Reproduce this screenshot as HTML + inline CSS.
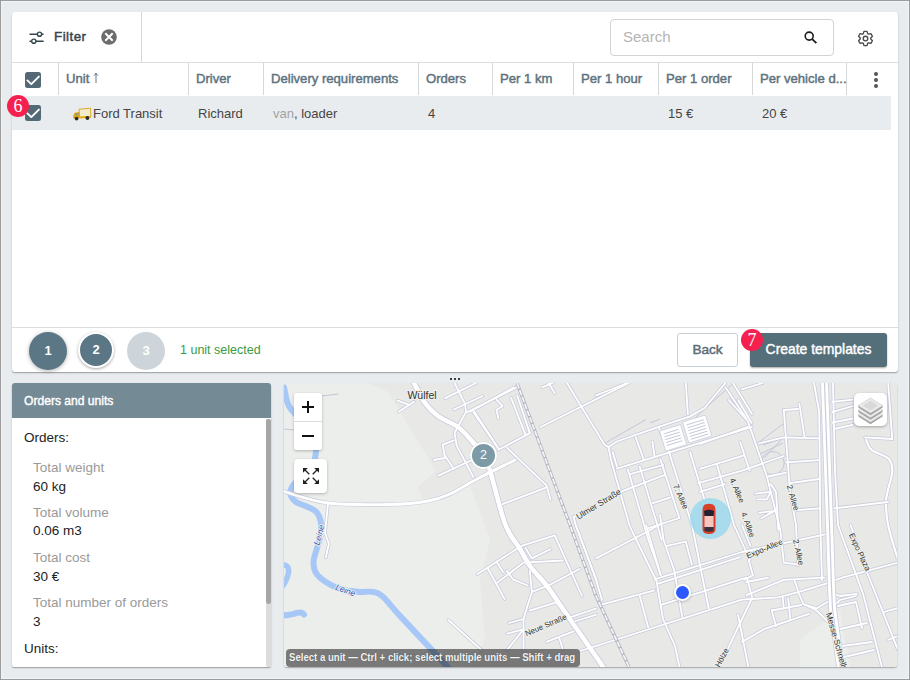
<!DOCTYPE html>
<html><head><meta charset="utf-8">
<style>
*{box-sizing:border-box;margin:0;padding:0}
html,body{width:910px;height:680px;overflow:hidden}
body{position:relative;background:#e8ecef;font-family:"Liberation Sans",sans-serif;}
#frame{position:absolute;left:0;top:0;width:910px;height:680px;border:1px solid #9c9c9c;z-index:50;pointer-events:none}
#frame2{position:absolute;left:1px;top:1px;width:908px;height:678px;border:1px solid #f2f5f7;z-index:49;pointer-events:none}
.abs{position:absolute}
#top{left:12px;top:12px;width:886px;height:360px;background:#fff;border-radius:3px;box-shadow:0 1px 1.5px rgba(0,0,0,.35)}
.vdiv{position:absolute;width:1px;background:#d5d7d9}
.hdr{position:absolute;top:59px;font-size:13.1px;font-weight:normal;-webkit-text-stroke:0.45px #5d727e;color:#5d727e;white-space:nowrap}
.cell{position:absolute;top:94px;font-size:13px;color:#333;white-space:nowrap}
.cb{position:absolute;width:16.6px;height:16.7px;background:#536a76;border-radius:2.5px}
.cb svg{position:absolute;left:0;top:0}
.badge{position:absolute;width:22px;height:22px;border-radius:50%;background:#f6204e;color:#fff;font-family:"Liberation Serif",serif;font-size:18px;text-align:center;line-height:23px}
#left{left:12px;top:383px;width:259px;height:284px;background:#fff;border-radius:3px 3px 2px 2px;box-shadow:0 1px 1.5px rgba(0,0,0,.35);overflow:hidden}
#left .head{position:absolute;left:0;top:0;width:259px;height:35px;background:#748a95;color:#fff;font-size:12.1px;-webkit-text-stroke:0.4px #fff;padding:11px 0 0 12px}
.lbl{position:absolute;left:21px;font-size:13.5px;color:#9a9a9a;white-space:nowrap}
.val{position:absolute;left:21px;font-size:13.5px;color:#222;white-space:nowrap}
.mlbl{position:absolute;color:#3a3a3a;white-space:nowrap;line-height:1}
#map{left:284px;top:383px;width:613px;height:284px;background:#e9eae8;overflow:hidden;border-radius:3px;box-shadow:0 1px 1.5px rgba(0,0,0,.3)}
</style></head><body>
<div id="frame"></div><div id="frame2"></div>

<div id="top" class="abs">
  <!-- toolbar -->
  <svg class="abs" style="left:15px;top:16px" width="18" height="18" viewBox="0 0 18 18">
    <g stroke="#34474f" stroke-width="1.4" fill="none">
      <path d="M2.5 6.2H10.3M14.7 6.2H16.6"/><circle cx="12.5" cy="6.2" r="2.1"/>
      <path d="M2.5 13.2H4.6M9 13.2H16.6"/><circle cx="6.8" cy="13.2" r="2.1"/>
    </g>
  </svg>
  <div class="abs" style="left:42px;top:15.5px;font-size:13.4px;letter-spacing:0.45px;-webkit-text-stroke:0.45px #37444d;color:#37444d;line-height:18px">Filter</div>
  <svg class="abs" style="left:89px;top:17px" width="16" height="16" viewBox="0 0 16 16">
    <circle cx="8" cy="8" r="7.8" fill="#6b6b6b"/>
    <path d="M4.3 4.3L11.7 11.7M11.7 4.3L4.3 11.7" stroke="#fff" stroke-width="2"/>
  </svg>
  <div class="vdiv" style="left:129px;top:0;height:50px"></div>
  <div class="abs" style="left:598px;top:7px;width:224px;height:37px;border:1px solid #d3d3d3;border-radius:4px"></div>
  <div class="abs" style="left:611px;top:15px;font-size:15px;color:#b4b4b4;line-height:20px">Search</div>
  <svg class="abs" style="left:790px;top:17px" width="16" height="16" viewBox="0 0 16 16">
    <circle cx="7.2" cy="7.1" r="4" stroke="#1d1d1d" stroke-width="1.6" fill="none"/>
    <path d="M10.2 10.1L14.4 14.1" stroke="#1d1d1d" stroke-width="1.8"/>
  </svg>
  <svg class="abs" style="left:843px;top:15.5px" width="21" height="21" viewBox="0 0 21 21">
    <path d="M8.34 5.66 L8.98 3.36 L12.02 3.36 L12.66 5.66 L13.62 6.21 L15.92 5.62 L17.44 8.24 L15.77 9.95 L15.77 11.05 L17.44 12.76 L15.92 15.38 L13.62 14.79 L12.66 15.34 L12.02 17.64 L8.98 17.64 L8.34 15.34 L7.38 14.79 L5.08 15.38 L3.56 12.76 L5.23 11.05 L5.23 9.95 L3.56 8.24 L5.08 5.62 L7.38 6.21Z" fill="none" stroke="#4a4a4a" stroke-width="1.35" stroke-linejoin="round"/>
    <circle cx="10.5" cy="10.5" r="2.3" fill="none" stroke="#4a4a4a" stroke-width="1.35"/>
  </svg>
  <div class="abs" style="left:0;top:50px;width:886px;height:1px;background:#dedede"></div>
  <!-- header -->
  <div class="cb" style="left:12.8px;top:59.5px"><svg width="17" height="17" viewBox="0 0 17 17"><path d="M2.4 8.4L6.3 12.1L13.9 4.6" stroke="#fff" stroke-width="1.9" stroke-linecap="round" stroke-linejoin="round" fill="none"/></svg></div>
  <div class="vdiv" style="left:46px;top:51px;height:32px"></div>
  <div class="vdiv" style="left:176px;top:51px;height:32px"></div>
  <div class="vdiv" style="left:251px;top:51px;height:32px"></div>
  <div class="vdiv" style="left:406px;top:51px;height:32px"></div>
  <div class="vdiv" style="left:480px;top:51px;height:32px"></div>
  <div class="vdiv" style="left:561px;top:51px;height:32px"></div>
  <div class="vdiv" style="left:646px;top:51px;height:32px"></div>
  <div class="vdiv" style="left:740px;top:51px;height:32px"></div>
  <div class="vdiv" style="left:834px;top:51px;height:32px"></div>
  <div class="hdr" style="left:54px">Unit</div><svg class="abs" style="left:81px;top:60px" width="6" height="12" viewBox="0 0 6 12"><path d="M3 1.5V11" stroke="#5d727e" stroke-width="0.95"/><path d="M1.2 3.6L3 1.1L4.8 3.6" stroke="#5d727e" stroke-width="0.95" fill="none"/></svg>
  <div class="hdr" style="left:184px">Driver</div>
  <div class="hdr" style="left:259px">Delivery requirements</div>
  <div class="hdr" style="left:414px">Orders</div>
  <div class="hdr" style="left:488px">Per 1 km</div>
  <div class="hdr" style="left:569px">Per 1 hour</div>
  <div class="hdr" style="left:654px">Per 1 order</div>
  <div class="hdr" style="left:748px">Per vehicle d...</div>
  <div class="abs" style="left:862px;top:60px;width:4px;height:16px">
    <div class="abs" style="left:0;top:0;width:4px;height:4px;border-radius:50%;background:#555"></div>
    <div class="abs" style="left:0;top:6px;width:4px;height:4px;border-radius:50%;background:#555"></div>
    <div class="abs" style="left:0;top:12px;width:4px;height:4px;border-radius:50%;background:#555"></div>
  </div>
  <!-- row -->
  <div class="abs" style="left:0;top:84px;width:879px;height:34px;background:#e9ecef"></div>
  <div class="cb" style="left:12.8px;top:92.8px"><svg width="17" height="17" viewBox="0 0 17 17"><path d="M2.4 8.4L6.3 12.1L13.9 4.6" stroke="#fff" stroke-width="1.9" stroke-linecap="round" stroke-linejoin="round" fill="none"/></svg></div>
  <svg class="abs" style="left:60px;top:95px" width="20" height="14" viewBox="0 0 20 14">
    <path d="M7 2.2L18.6 1.2L18.9 9.6L7.6 10.4Z" fill="#f2ebc8" stroke="#d9a514" stroke-width="0.9"/>
    <path d="M7 5L2.6 5.8L1 9.2L1.2 11.4L8 11L7.6 5Z" fill="#e3ac10"/>
    <path d="M3.3 6.4L6.4 5.9L6.5 8.2L2.6 8.6Z" fill="#8a9aa2"/>
    <path d="M7.6 9.6L18.9 9L19 10.8L7.8 11.6Z" fill="#e3ac10"/>
    <circle cx="4.6" cy="11.6" r="1.9" fill="#2b2b2b"/><circle cx="15.4" cy="11" r="1.9" fill="#2b2b2b"/>
  </svg>
  <div class="cell" style="left:81px;color:#454545">Ford Transit</div>
  <div class="cell" style="left:186px;color:#454545">Richard</div>
  <div class="cell" style="left:261px;color:#454545"><span style="color:#a3a3a3">van</span>, loader</div>
  <div class="cell" style="left:416px;color:#454545">4</div>
  <div class="cell" style="left:656px;color:#454545">15 &#8364;</div>
  <div class="cell" style="left:750px;color:#454545">20 &#8364;</div>
  <!-- footer -->
  <div class="abs" style="left:0;top:315px;width:886px;height:1px;background:#dcdcdc"></div>
  <div class="abs" style="left:17px;top:319.5px;width:38px;height:38px;border-radius:50%;background:#5b7684;box-shadow:0 1px 4px rgba(0,0,0,.3);color:#fff;font-weight:bold;font-size:13px;text-align:center;line-height:38px">1</div>
  <div class="abs" style="left:66px;top:320px;width:36px;height:36px;border-radius:50%;background:#5b7684;border:2.5px solid #fff;box-shadow:0 1px 3px rgba(0,0,0,.35);color:#fff;font-weight:bold;font-size:13px;text-align:center;line-height:31px">2</div>
  <div class="abs" style="left:115px;top:319.5px;width:38px;height:38px;border-radius:50%;background:#cdd5db;color:#fff;font-weight:bold;font-size:13px;text-align:center;line-height:38px">3</div>
  <div class="abs" style="left:168px;top:330px;font-size:12.5px;color:#3a9a3f;line-height:16px;white-space:nowrap">1 unit selected</div>
  <div class="abs" style="left:665px;top:321px;width:61px;height:34px;border:1px solid #c9d1d6;border-radius:3px;color:#5b6b75;font-size:13.6px;-webkit-text-stroke:0.45px #5b6b75;text-align:center;line-height:32px">Back</div>
  <div class="abs" style="left:738px;top:321px;width:137px;height:34px;background:#546e7a;border-radius:3px;box-shadow:0 1px 2px rgba(0,0,0,.35);color:#fff;font-size:13.9px;-webkit-text-stroke:0.45px #fff;text-align:center;line-height:33px">Create templates</div>
</div>
<div class="badge" style="left:7px;top:95px">6</div>
<div class="badge" style="left:741px;top:329px">7</div>


<div id="left" class="abs">
  <div class="head">Orders and units</div>
  <div class="val" style="left:12px;top:47px">Orders:</div>
  <div class="lbl" style="top:77px">Total weight</div>
  <div class="val" style="top:95.5px">60 kg</div>
  <div class="lbl" style="top:122px">Total volume</div>
  <div class="val" style="top:140px">0.06 m3</div>
  <div class="lbl" style="top:167px">Total cost</div>
  <div class="val" style="top:185.5px">30 &#8364;</div>
  <div class="lbl" style="top:212px">Total number of orders</div>
  <div class="val" style="top:230.5px">3</div>
  <div class="val" style="left:12px;top:258px">Units:</div>
  <div class="abs" style="left:254px;top:36px;width:5px;height:248px;background:#dcdcdc;border-radius:0 0 2px 2px"></div>
  <div class="abs" style="left:254px;top:36px;width:5px;height:185px;background:#a6a6a6;border-radius:2.5px"></div>
</div>

<div id="map" class="abs">
<svg class="abs" style="left:0;top:0" width="614" height="284" viewBox="284 383 614 284">
<rect x="284" y="383" width="614" height="284" fill="#e8e9e7"/>
<path d="M284 383 L368 383 L388 392 L436 471 L418 487 L423 500 L470 485 L490 540 L480 580 L485 640 L470 667 L284 667Z" fill="#eceeeb"/>
<path d="M800 640 L840 610 L850 667 L800 667Z" fill="#eceeeb"/>
<path d="M284.0 387.4 C284.7 390.3 286.2 400.2 288.4 405.0 C290.6 409.8 294.1 412.7 297.0 416.0 C299.9 419.3 303.2 421.3 306.0 425.0 C308.8 428.7 312.3 433.7 314.0 438.0 C315.7 442.3 316.3 446.3 316.0 451.0 C315.7 455.7 314.7 461.5 312.0 466.0 C309.3 470.5 303.2 474.7 300.0 478.0 C296.8 481.3 294.1 483.3 292.5 486.0 C290.9 488.7 289.9 491.8 290.5 494.4 C291.1 497.0 293.2 499.8 295.8 501.8 C298.4 503.8 302.6 504.5 306.0 506.2 C309.4 507.9 313.9 509.3 316.4 512.0 C318.9 514.7 320.1 518.4 320.8 522.4 C321.5 526.4 321.2 531.4 320.5 536.0 C319.8 540.6 317.6 545.6 316.4 550.0 C315.2 554.4 313.3 558.4 313.5 562.6 C313.7 566.8 313.6 570.9 317.4 575.1 C321.2 579.3 329.6 584.8 336.2 587.6 C342.8 590.4 351.2 591.1 357.1 591.8 C363.0 592.5 367.5 591.1 371.7 591.8 C375.9 592.5 377.2 591.8 382.1 596.0 C387.0 600.2 391.2 606.5 400.9 616.9 C410.5 627.3 431.8 649.8 440.0 658.6 C448.2 667.5 448.3 668.1 450.0 670.0" stroke="#a7c8f7" stroke-width="6" fill="none" stroke-linejoin="round" stroke-linecap="round"/>
<path d="M282 564.5 Q289.5 565 288.6 572 Q287.5 580 282 587" stroke="#a7c8f7" stroke-width="5.5" fill="none" stroke-linecap="round"/>
<path d="M282 615.5 Q292 615 297 612.8 Q302 611.5 304 614.5" stroke="#a7c8f7" stroke-width="6" fill="none" stroke-linecap="round"/>
<path d="M763.0 445.0 L786.0 437.0" stroke="#c3c6d8" stroke-width="1" fill="none"/>
<path d="M764.0 458.0 L784.0 437.0" stroke="#c3c6d8" stroke-width="1" fill="none"/>
<path d="M284.0 429.0 L294.0 430.0" stroke="#c3c6d8" stroke-width="1" fill="none"/>
<path d="M321.5 396.0 L338.5 394.0" stroke="#c3c6d8" stroke-width="1" fill="none"/>
<path d="M316.0 393.0 L322.0 400.0" stroke="#c3c6d8" stroke-width="1" fill="none"/>
<path d="M604.4 443.5 L646.1 419.5" stroke="#c3c6d8" stroke-width="1" fill="none"/>
<path d="M650.0 423.0 L660.0 419.0" stroke="#c3c6d8" stroke-width="1" fill="none"/>
<path d="M758.0 443.0 L783.0 424.0" stroke="#c3c6d8" stroke-width="1" fill="none"/>
<path d="M758.0 455.0 L783.0 443.0" stroke="#c3c6d8" stroke-width="1" fill="none"/>
<path d="M695.0 418.0 L720.0 395.0 L734.0 383.0" stroke="#c3c6d8" stroke-width="1" fill="none"/>
<circle cx="772.7" cy="463" r="11.5" stroke="#c3c6d8" stroke-width="1" fill="none"/>
<path d="M865.2 437.3 C866.2 439.4 867.6 446.3 871.4 449.8 C875.2 453.3 884.6 454.7 888.1 458.2 C891.6 461.7 892.3 465.4 892.3 470.7 C892.3 476.0 889.0 484.8 888.0 490.0 C887.0 495.2 886.0 496.2 886.0 502.0 C886.0 507.8 886.1 515.3 888.1 525.0 C890.1 534.7 896.4 554.2 898.0 560.0" stroke="#c9cbdb" stroke-width="3.6" fill="none"/><path d="M865.2 437.3 C866.2 439.4 867.6 446.3 871.4 449.8 C875.2 453.3 884.6 454.7 888.1 458.2 C891.6 461.7 892.3 465.4 892.3 470.7 C892.3 476.0 889.0 484.8 888.0 490.0 C887.0 495.2 886.0 496.2 886.0 502.0 C886.0 507.8 886.1 515.3 888.1 525.0 C890.1 534.7 896.4 554.2 898.0 560.0" stroke="#fff" stroke-width="2.1" fill="none"/>
<g stroke="#c9cbdb" fill="none" stroke-linejoin="round" stroke-linecap="round">
<g stroke-width="3.4"><path d="M328.0 504.0 L325.0 533.0 L328.9 543.8 L325.8 557.4"/><path d="M397.5 400.6 L409.7 405.0"/><path d="M398.7 411.7 L414.0 401.7"/><path d="M445.0 398.4 L476.0 383.0"/><path d="M453.8 409.5 L482.5 396.0"/><path d="M454.6 383.0 L465.0 404.0 L466.0 412.0 L460.0 422.7 L454.6 433.0 L456.7 445.6 L473.4 477.0"/><path d="M467.0 412.2 L517.2 387.2"/><path d="M473.4 412.2 L496.4 445.6"/><path d="M496.4 399.7 L502.6 406.0 L496.4 410.1 L498.5 418.5"/><path d="M511.0 397.6 L525.6 435.2"/><path d="M517.2 395.5 L529.8 433.1"/><path d="M498.5 449.8 L529.8 433.1"/><path d="M440.0 474.9 L471.3 460.2"/><path d="M438.4 475.6 L440.0 474.9"/><path d="M442.8 444.7 L453.8 440.3"/><path d="M434.0 460.0 L445.0 458.0 L442.8 444.7"/><path d="M445.0 455.8 L453.8 469.0"/><path d="M506.8 447.7 L546.5 485.3 L550.6 499.9"/><path d="M502.6 504.1 L546.5 487.4"/><path d="M470.0 411.7 L514.0 387.4"/><path d="M474.4 411.7 L498.7 449.0"/><path d="M540.5 427.0 L628.8 383.0"/><path d="M567.0 383.0 L604.5 444.7 L608.5 447.0"/><path d="M542.3 387.2 L552.7 383.0"/><path d="M548.6 383.0 L554.8 393.4"/><path d="M596.0 395.5 L627.3 383.0"/><path d="M725.4 383.0 L704.6 408.0 L690.0 416.4 L658.6 426.8 L616.9 441.5 L608.5 447.0 L611.0 460.0 L629.4 525.0 L632.5 532.0 L656.5 581.0 L663.0 619.0 L675.0 646.0 L679.5 667.0"/><path d="M612.7 451.9 L616.9 466.5"/><path d="M635.7 437.3 L644.0 460.2"/><path d="M652.4 441.5 L654.5 456.0"/><path d="M667.0 545.9 L685.8 541.7 L692.0 564.7"/><path d="M616.9 468.6 L752.0 426.8"/><path d="M685.8 383.0 L687.9 414.3"/><path d="M725.4 387.2 L746.3 418.5"/><path d="M733.0 383.0 L752.0 414.0"/><path d="M658.6 427.0 L669.0 452.0 L692.0 525.0 L708.7 608.5"/><path d="M690.0 452.0 L704.6 500.0"/><path d="M717.0 464.4 L734.0 525.0 L750.0 560.0"/><path d="M747.8 426.8 L700.0 444.0"/><path d="M698.3 483.2 L742.0 470.7 L783.8 456.0"/><path d="M621.0 491.6 L664.9 474.9"/><path d="M573.6 517.0 L621.0 491.6"/><path d="M573.6 517.0 L575.7 525.0 L596.0 579.3 L602.0 600.0"/><path d="M630.9 473.8 L663.2 465.0"/><path d="M627.9 469.4 L648.5 540.0 L660.7 575.0"/><path d="M639.7 466.5 L661.8 540.0"/><path d="M652.9 503.2 L670.6 497.4"/><path d="M660.3 459.1 L679.4 518.0"/><path d="M648.5 528.2 L679.4 518.0"/><path d="M646.1 525.0 L660.7 575.1"/><path d="M660.0 515.0 L663.6 540.0 L674.2 570.4 L682.2 616.7"/><path d="M596.0 558.4 L648.2 531.3 L658.6 525.0"/><path d="M728.7 400.0 L747.8 421.0 L766.9 476.5 L780.3 530.0 L783.8 562.6 L798.4 564.7"/><path d="M738.2 400.0 L751.6 423.0"/><path d="M700.0 468.8 L744.0 455.4"/><path d="M700.0 491.8 L724.9 484.1"/><path d="M740.2 442.1 L749.7 470.7"/><path d="M755.4 493.7 L770.7 491.8 L766.9 499.4 L757.4 499.4"/><path d="M759.3 512.8 L774.6 510.9 L761.2 518.5"/><path d="M768.8 476.5 L786.0 472.7"/><path d="M770.7 484.0 L776.0 492.0 L778.4 530.0"/><path d="M783.8 410.0 L790.0 491.6 L796.0 525.0 L798.0 565.0"/><path d="M783.8 410.0 L798.0 409.0"/><path d="M799.4 403.9 L804.6 437.3"/><path d="M758.7 443.5 L783.8 437.3 L819.2 438.3"/><path d="M785.8 462.3 L819.2 460.2"/><path d="M790.0 483.2 L819.2 479.0"/><path d="M794.2 510.3 L819.2 508.3"/><path d="M742.0 389.3 L762.9 383.0"/><path d="M814.0 383.0 L819.2 412.2 L820.3 525.0 L822.0 580.0"/><path d="M833.0 383.0 L835.0 470.0 L838.0 525.0 L863.1 593.9 L881.9 667.0"/><path d="M833.9 508.3 L888.1 502.0"/><path d="M832.0 401.8 L852.9 399.7"/><path d="M832.0 412.2 L852.9 406.0"/><path d="M832.0 422.7 L852.9 418.5"/><path d="M834.0 429.0 L852.9 424.8"/><path d="M888.1 383.0 L892.3 439.4"/><path d="M865.0 437.3 L892.0 439.0"/><path d="M850.6 525.0 L867.3 573.0 L898.0 650.0"/><path d="M596.0 646.0 L742.0 599.6 L778.3 597.4 L799.1 591.9 L827.7 583.1 L842.0 577.6 L898.0 562.6"/><path d="M580.0 651.0 L596.0 646.0"/><path d="M602.3 604.3 L654.4 590.3"/><path d="M661.0 604.8 L740.0 579.7 L746.4 577.5"/><path d="M658.4 583.7 L740.0 557.2"/><path d="M747.0 578.0 L752.0 597.0"/><path d="M746.4 595.2 L783.8 579.8 L824.4 577.6"/><path d="M746.4 582.0 L768.4 577.6"/><path d="M744.2 579.8 L753.0 575.4 L748.6 560.0"/><path d="M654.5 579.3 L742.0 552.0 L830.0 533.4"/><path d="M639.8 596.0 L648.2 627.3"/><path d="M752.0 598.0 L719.2 667.0"/><path d="M738.0 614.8 L748.4 667.0"/><path d="M742.0 641.9 L764.0 629.2 L809.0 613.8"/><path d="M771.7 610.5 L801.3 605.0"/><path d="M771.7 610.5 L776.0 626.0"/><path d="M782.7 597.4 L783.8 608.4"/><path d="M788.2 598.5 L790.4 619.3"/><path d="M794.7 580.9 L799.0 594.0 L803.5 604.0 L816.7 608.4 L827.7 601.8"/><path d="M803.5 604.0 L816.7 610.5 L827.7 621.5"/><path d="M833.9 593.9 L840.1 596.0 L856.8 593.9"/><path d="M834.0 606.0 L840.0 600.0 L856.0 596.0"/><path d="M838.0 606.0 L856.0 602.0 L862.0 628.0"/><path d="M840.0 629.0 L867.0 623.0"/><path d="M842.0 646.0 L872.0 642.0"/><path d="M844.0 657.0 L874.0 650.0"/><path d="M742.0 525.0 L750.5 546.0"/><path d="M884.0 612.0 L898.0 608.0"/><path d="M888.0 640.0 L898.0 636.0"/><path d="M477.6 574.1 L521.4 545.9 L554.8 535.4 L582.0 596.0"/><path d="M488.0 568.8 L504.7 599.1"/><path d="M496.4 561.5 L503.0 572.0"/><path d="M496.4 583.4 L523.5 562.6 L563.0 560.5"/><path d="M525.6 548.0 L531.9 558.4 L550.6 549.0"/><path d="M506.8 570.9 L513.0 579.3 L527.7 585.5"/><path d="M529.8 570.9 L531.9 591.8 L523.5 619.0 L523.5 650.3"/><path d="M531.9 591.8 L548.6 585.5 L579.9 568.8"/><path d="M529.8 610.6 L556.9 602.2"/><path d="M509.0 623.0 L523.5 619.0"/><path d="M507.0 633.6 L523.5 629.4 L507.0 650.0"/><path d="M571.5 616.9 L596.0 608.5"/><path d="M575.7 621.0 L596.0 614.8"/><path d="M546.5 641.9 L573.6 631.4"/><path d="M559.0 637.0 L563.0 650.0"/><path d="M448.4 620.0 L481.8 650.3"/><path d="M575.7 525.0 L596.0 579.3"/></g>
<g stroke-width="4.2"><path d="M284.0 491.5 C291.3 493.4 310.3 500.8 328.0 503.0 C345.7 505.2 373.3 504.8 390.0 504.5 C406.7 504.2 418.0 502.8 428.0 501.0 C438.0 499.2 441.8 497.7 450.0 494.0 C458.2 490.3 466.2 484.7 477.0 479.0 C487.8 473.3 508.7 463.2 515.0 460.0"/></g>
<g stroke-width="6.3"><path d="M414.0 383.0 C415.8 386.3 421.0 397.5 425.0 403.0 C429.0 408.5 432.5 412.0 438.0 416.0 C443.5 420.0 452.5 423.0 458.0 427.0 C463.5 431.0 466.8 435.3 471.0 440.0 C475.2 444.7 479.8 449.8 483.0 455.0 C486.2 460.2 486.2 459.3 490.0 471.0 C493.8 482.7 500.5 512.0 505.5 525.0 C510.5 538.0 515.9 542.2 520.0 549.0 C524.1 555.8 525.5 559.8 530.0 566.0 C534.5 572.2 541.4 578.7 547.0 586.0 C552.6 593.3 555.4 598.2 563.6 610.0 C571.8 621.8 589.4 647.0 596.0 656.5 C602.6 666.0 601.8 665.2 603.0 667.0"/></g>
</g>
<g stroke="#fff" fill="none" stroke-linejoin="round" stroke-linecap="round">
<g stroke-width="1.8"><path d="M328.0 504.0 L325.0 533.0 L328.9 543.8 L325.8 557.4"/><path d="M397.5 400.6 L409.7 405.0"/><path d="M398.7 411.7 L414.0 401.7"/><path d="M445.0 398.4 L476.0 383.0"/><path d="M453.8 409.5 L482.5 396.0"/><path d="M454.6 383.0 L465.0 404.0 L466.0 412.0 L460.0 422.7 L454.6 433.0 L456.7 445.6 L473.4 477.0"/><path d="M467.0 412.2 L517.2 387.2"/><path d="M473.4 412.2 L496.4 445.6"/><path d="M496.4 399.7 L502.6 406.0 L496.4 410.1 L498.5 418.5"/><path d="M511.0 397.6 L525.6 435.2"/><path d="M517.2 395.5 L529.8 433.1"/><path d="M498.5 449.8 L529.8 433.1"/><path d="M440.0 474.9 L471.3 460.2"/><path d="M438.4 475.6 L440.0 474.9"/><path d="M442.8 444.7 L453.8 440.3"/><path d="M434.0 460.0 L445.0 458.0 L442.8 444.7"/><path d="M445.0 455.8 L453.8 469.0"/><path d="M506.8 447.7 L546.5 485.3 L550.6 499.9"/><path d="M502.6 504.1 L546.5 487.4"/><path d="M470.0 411.7 L514.0 387.4"/><path d="M474.4 411.7 L498.7 449.0"/><path d="M540.5 427.0 L628.8 383.0"/><path d="M567.0 383.0 L604.5 444.7 L608.5 447.0"/><path d="M542.3 387.2 L552.7 383.0"/><path d="M548.6 383.0 L554.8 393.4"/><path d="M596.0 395.5 L627.3 383.0"/><path d="M725.4 383.0 L704.6 408.0 L690.0 416.4 L658.6 426.8 L616.9 441.5 L608.5 447.0 L611.0 460.0 L629.4 525.0 L632.5 532.0 L656.5 581.0 L663.0 619.0 L675.0 646.0 L679.5 667.0"/><path d="M612.7 451.9 L616.9 466.5"/><path d="M635.7 437.3 L644.0 460.2"/><path d="M652.4 441.5 L654.5 456.0"/><path d="M667.0 545.9 L685.8 541.7 L692.0 564.7"/><path d="M616.9 468.6 L752.0 426.8"/><path d="M685.8 383.0 L687.9 414.3"/><path d="M725.4 387.2 L746.3 418.5"/><path d="M733.0 383.0 L752.0 414.0"/><path d="M658.6 427.0 L669.0 452.0 L692.0 525.0 L708.7 608.5"/><path d="M690.0 452.0 L704.6 500.0"/><path d="M717.0 464.4 L734.0 525.0 L750.0 560.0"/><path d="M747.8 426.8 L700.0 444.0"/><path d="M698.3 483.2 L742.0 470.7 L783.8 456.0"/><path d="M621.0 491.6 L664.9 474.9"/><path d="M573.6 517.0 L621.0 491.6"/><path d="M573.6 517.0 L575.7 525.0 L596.0 579.3 L602.0 600.0"/><path d="M630.9 473.8 L663.2 465.0"/><path d="M627.9 469.4 L648.5 540.0 L660.7 575.0"/><path d="M639.7 466.5 L661.8 540.0"/><path d="M652.9 503.2 L670.6 497.4"/><path d="M660.3 459.1 L679.4 518.0"/><path d="M648.5 528.2 L679.4 518.0"/><path d="M646.1 525.0 L660.7 575.1"/><path d="M660.0 515.0 L663.6 540.0 L674.2 570.4 L682.2 616.7"/><path d="M596.0 558.4 L648.2 531.3 L658.6 525.0"/><path d="M728.7 400.0 L747.8 421.0 L766.9 476.5 L780.3 530.0 L783.8 562.6 L798.4 564.7"/><path d="M738.2 400.0 L751.6 423.0"/><path d="M700.0 468.8 L744.0 455.4"/><path d="M700.0 491.8 L724.9 484.1"/><path d="M740.2 442.1 L749.7 470.7"/><path d="M755.4 493.7 L770.7 491.8 L766.9 499.4 L757.4 499.4"/><path d="M759.3 512.8 L774.6 510.9 L761.2 518.5"/><path d="M768.8 476.5 L786.0 472.7"/><path d="M770.7 484.0 L776.0 492.0 L778.4 530.0"/><path d="M783.8 410.0 L790.0 491.6 L796.0 525.0 L798.0 565.0"/><path d="M783.8 410.0 L798.0 409.0"/><path d="M799.4 403.9 L804.6 437.3"/><path d="M758.7 443.5 L783.8 437.3 L819.2 438.3"/><path d="M785.8 462.3 L819.2 460.2"/><path d="M790.0 483.2 L819.2 479.0"/><path d="M794.2 510.3 L819.2 508.3"/><path d="M742.0 389.3 L762.9 383.0"/><path d="M814.0 383.0 L819.2 412.2 L820.3 525.0 L822.0 580.0"/><path d="M833.0 383.0 L835.0 470.0 L838.0 525.0 L863.1 593.9 L881.9 667.0"/><path d="M833.9 508.3 L888.1 502.0"/><path d="M832.0 401.8 L852.9 399.7"/><path d="M832.0 412.2 L852.9 406.0"/><path d="M832.0 422.7 L852.9 418.5"/><path d="M834.0 429.0 L852.9 424.8"/><path d="M888.1 383.0 L892.3 439.4"/><path d="M865.0 437.3 L892.0 439.0"/><path d="M850.6 525.0 L867.3 573.0 L898.0 650.0"/><path d="M596.0 646.0 L742.0 599.6 L778.3 597.4 L799.1 591.9 L827.7 583.1 L842.0 577.6 L898.0 562.6"/><path d="M580.0 651.0 L596.0 646.0"/><path d="M602.3 604.3 L654.4 590.3"/><path d="M661.0 604.8 L740.0 579.7 L746.4 577.5"/><path d="M658.4 583.7 L740.0 557.2"/><path d="M747.0 578.0 L752.0 597.0"/><path d="M746.4 595.2 L783.8 579.8 L824.4 577.6"/><path d="M746.4 582.0 L768.4 577.6"/><path d="M744.2 579.8 L753.0 575.4 L748.6 560.0"/><path d="M654.5 579.3 L742.0 552.0 L830.0 533.4"/><path d="M639.8 596.0 L648.2 627.3"/><path d="M752.0 598.0 L719.2 667.0"/><path d="M738.0 614.8 L748.4 667.0"/><path d="M742.0 641.9 L764.0 629.2 L809.0 613.8"/><path d="M771.7 610.5 L801.3 605.0"/><path d="M771.7 610.5 L776.0 626.0"/><path d="M782.7 597.4 L783.8 608.4"/><path d="M788.2 598.5 L790.4 619.3"/><path d="M794.7 580.9 L799.0 594.0 L803.5 604.0 L816.7 608.4 L827.7 601.8"/><path d="M803.5 604.0 L816.7 610.5 L827.7 621.5"/><path d="M833.9 593.9 L840.1 596.0 L856.8 593.9"/><path d="M834.0 606.0 L840.0 600.0 L856.0 596.0"/><path d="M838.0 606.0 L856.0 602.0 L862.0 628.0"/><path d="M840.0 629.0 L867.0 623.0"/><path d="M842.0 646.0 L872.0 642.0"/><path d="M844.0 657.0 L874.0 650.0"/><path d="M742.0 525.0 L750.5 546.0"/><path d="M884.0 612.0 L898.0 608.0"/><path d="M888.0 640.0 L898.0 636.0"/><path d="M477.6 574.1 L521.4 545.9 L554.8 535.4 L582.0 596.0"/><path d="M488.0 568.8 L504.7 599.1"/><path d="M496.4 561.5 L503.0 572.0"/><path d="M496.4 583.4 L523.5 562.6 L563.0 560.5"/><path d="M525.6 548.0 L531.9 558.4 L550.6 549.0"/><path d="M506.8 570.9 L513.0 579.3 L527.7 585.5"/><path d="M529.8 570.9 L531.9 591.8 L523.5 619.0 L523.5 650.3"/><path d="M531.9 591.8 L548.6 585.5 L579.9 568.8"/><path d="M529.8 610.6 L556.9 602.2"/><path d="M509.0 623.0 L523.5 619.0"/><path d="M507.0 633.6 L523.5 629.4 L507.0 650.0"/><path d="M571.5 616.9 L596.0 608.5"/><path d="M575.7 621.0 L596.0 614.8"/><path d="M546.5 641.9 L573.6 631.4"/><path d="M559.0 637.0 L563.0 650.0"/><path d="M448.4 620.0 L481.8 650.3"/><path d="M575.7 525.0 L596.0 579.3"/></g>
<g stroke-width="2.8"><path d="M284.0 491.5 C291.3 493.4 310.3 500.8 328.0 503.0 C345.7 505.2 373.3 504.8 390.0 504.5 C406.7 504.2 418.0 502.8 428.0 501.0 C438.0 499.2 441.8 497.7 450.0 494.0 C458.2 490.3 466.2 484.7 477.0 479.0 C487.8 473.3 508.7 463.2 515.0 460.0"/></g>
<g stroke-width="4.6"><path d="M414.0 383.0 C415.8 386.3 421.0 397.5 425.0 403.0 C429.0 408.5 432.5 412.0 438.0 416.0 C443.5 420.0 452.5 423.0 458.0 427.0 C463.5 431.0 466.8 435.3 471.0 440.0 C475.2 444.7 479.8 449.8 483.0 455.0 C486.2 460.2 486.2 459.3 490.0 471.0 C493.8 482.7 500.5 512.0 505.5 525.0 C510.5 538.0 515.9 542.2 520.0 549.0 C524.1 555.8 525.5 559.8 530.0 566.0 C534.5 572.2 541.4 578.7 547.0 586.0 C552.6 593.3 555.4 598.2 563.6 610.0 C571.8 621.8 589.4 647.0 596.0 656.5 C602.6 666.0 601.8 665.2 603.0 667.0"/></g>
</g>
<path d="M824.5 383.0 L829.5 525.0 L831.5 587.6 L832.5 608.5 L840.5 667.0" stroke="#c9cbdb" stroke-width="8.5" fill="none"/>
<path d="M824.5 383.0 L829.5 525.0 L831.5 587.6 L832.5 608.5 L840.5 667.0" stroke="#fff" stroke-width="7" fill="none"/>
<path d="M824.5 383.0 L829.5 525.0 L831.5 587.6 L832.5 608.5 L840.5 667.0" stroke="#c9cbd9" stroke-width="1.2" fill="none"/>
<path d="M517.0 383.0 L570.0 525.0 L596.0 596.0 L629.0 667.0" stroke="#b0b2bf" stroke-width="3.3" fill="none"/>
<path d="M517.0 383.0 L570.0 525.0 L596.0 596.0 L629.0 667.0" stroke="#f6f6f8" stroke-width="1.7" stroke-dasharray="6 1.3" fill="none"/>
<g transform="translate(659.5 431) rotate(-17)"><rect x="0" y="0" width="22" height="21" fill="#fff" stroke="#cdcfdc" stroke-width="0.8"/><path d="M3 4 H19" stroke="#c4c7d8" stroke-width="0.9"/><path d="M3 7 H19" stroke="#c4c7d8" stroke-width="0.9"/><path d="M3 10 H19" stroke="#c4c7d8" stroke-width="0.9"/><path d="M3 13 H19" stroke="#c4c7d8" stroke-width="0.9"/><path d="M3 16 H19" stroke="#c4c7d8" stroke-width="0.9"/></g>
<g transform="translate(682.5 422) rotate(-17)"><rect x="0" y="0" width="24" height="22" fill="#fff" stroke="#cdcfdc" stroke-width="0.8"/><path d="M3 4 H21" stroke="#c4c7d8" stroke-width="0.9"/><path d="M3 7 H21" stroke="#c4c7d8" stroke-width="0.9"/><path d="M3 10 H21" stroke="#c4c7d8" stroke-width="0.9"/><path d="M3 13 H21" stroke="#c4c7d8" stroke-width="0.9"/><path d="M3 16 H21" stroke="#c4c7d8" stroke-width="0.9"/><path d="M3 19 H21" stroke="#c4c7d8" stroke-width="0.9"/></g>
<g font-family="Liberation Sans, sans-serif"><text x="422" y="394.8" transform="rotate(0 422 394.8)" text-anchor="middle" dominant-baseline="central" font-size="10.5" fill="#333" stroke="#eef0ec" stroke-width="2" paint-order="stroke">Wülfel</text><text x="598.5" y="504" transform="rotate(-31.5 598.5 504)" text-anchor="middle" dominant-baseline="central" font-size="8.5" fill="#333" stroke="#eef0ec" stroke-width="2" paint-order="stroke">Ulmer Straße</text><text x="680.5" y="496.8" transform="rotate(66 680.5 496.8)" text-anchor="middle" dominant-baseline="central" font-size="8" fill="#333" stroke="#eef0ec" stroke-width="2" paint-order="stroke">7. Allee</text><text x="736.9" y="490.5" transform="rotate(67 736.9 490.5)" text-anchor="middle" dominant-baseline="central" font-size="8" fill="#333" stroke="#eef0ec" stroke-width="2" paint-order="stroke">4. Allee</text><text x="747.9" y="524.8" transform="rotate(70 747.9 524.8)" text-anchor="middle" dominant-baseline="central" font-size="8" fill="#333" stroke="#eef0ec" stroke-width="2" paint-order="stroke">4. Allee</text><text x="792.7" y="497.8" transform="rotate(74 792.7 497.8)" text-anchor="middle" dominant-baseline="central" font-size="8" fill="#333" stroke="#eef0ec" stroke-width="2" paint-order="stroke">2. Allee</text><text x="798.3" y="552.2" transform="rotate(77 798.3 552.2)" text-anchor="middle" dominant-baseline="central" font-size="8" fill="#333" stroke="#eef0ec" stroke-width="2" paint-order="stroke">2. Allee</text><text x="764.5" y="549" transform="rotate(-23 764.5 549)" text-anchor="middle" dominant-baseline="central" font-size="8" fill="#333" stroke="#eef0ec" stroke-width="2" paint-order="stroke">Expo-Allee</text><text x="859.5" y="552.1" transform="rotate(65 859.5 552.1)" text-anchor="middle" dominant-baseline="central" font-size="8" fill="#333" stroke="#eef0ec" stroke-width="2" paint-order="stroke">Expo Plaza</text><text x="722.2" y="657.6" transform="rotate(-62 722.2 657.6)" text-anchor="middle" dominant-baseline="central" font-size="8" fill="#333" stroke="#eef0ec" stroke-width="2" paint-order="stroke">Hölze</text><text x="546" y="625.2" transform="rotate(-23 546 625.2)" text-anchor="middle" dominant-baseline="central" font-size="7.8" fill="#333" stroke="#eef0ec" stroke-width="2" paint-order="stroke">Neue Straße</text><text x="319" y="535" transform="rotate(-75 319 535)" text-anchor="middle" dominant-baseline="central" font-size="8.5" fill="#2f56b8" font-style="italic" stroke="#eef0ec" stroke-width="2" paint-order="stroke">Leine</text><text x="345.5" y="590.2" transform="rotate(20 345.5 590.2)" text-anchor="middle" dominant-baseline="central" font-size="8.5" fill="#2f56b8" font-style="italic" stroke="#eef0ec" stroke-width="2" paint-order="stroke">Leine</text><text x="828.6" y="612.7" transform="rotate(74 828.6 612.7)" dominant-baseline="central" font-size="8.5" fill="#333" stroke="#eef0ec" stroke-width="2" paint-order="stroke">Messe-Schnellweg</text></g>
</svg>
<div class="abs" style="left:443px;top:0;width:32px;height:12px"></div>
<!-- markers -->
<div class="abs" style="left:186px;top:59px;width:27px;height:27px;border-radius:50%;background:#7d9aa7;border:2.2px solid #fff;box-shadow:0 0 1px rgba(0,0,0,.2);color:#fff;font-size:12.5px;text-align:center;line-height:22.6px">2</div>
<div class="abs" style="left:405.5px;top:114.5px;width:41px;height:41px;border-radius:50%;background:rgba(143,214,238,.72)"></div>
<svg class="abs" style="left:417px;top:119.8px" width="16" height="32" viewBox="0 0 16 32">
  <path d="M4 1.5 Q8 0 12 1.5 Q14.5 3 14.5 8 L14.5 26 Q14.5 31 8 31 Q1.5 31 1.5 26 L1.5 8 Q1.5 3 4 1.5Z" fill="#d9402c"/>
  <path d="M3 8 Q8 5.5 13 8 L12.5 13 L3.5 13Z" fill="#223"/>
  <rect x="3.5" y="13" width="9" height="11" fill="#f6c5c0"/>
  <path d="M3.5 24 L12.5 24 L12.5 28 Q8 29.5 3.5 28Z" fill="#334"/>
</svg>
<div class="abs" style="left:389.8px;top:201.3px;width:17px;height:17px;border-radius:50%;background:#2b59fd;border:2px solid #fff;box-shadow:0 1px 3px rgba(0,0,0,.22)"></div>
<!-- controls -->
<div class="abs" style="left:10px;top:10px;width:28px;height:57px;background:#fff;border-radius:2px;box-shadow:0 1px 3px rgba(0,0,0,.25)">
  <div class="abs" style="left:0;top:28px;width:28px;height:1px;background:#dcdcdc"></div>
  <svg class="abs" style="left:6px;top:6px" width="16" height="16" viewBox="0 0 16 16"><path d="M8 2V14M2 8H14" stroke="#111" stroke-width="2"/></svg>
  <svg class="abs" style="left:6px;top:35px" width="16" height="16" viewBox="0 0 16 16"><path d="M2 8H14" stroke="#111" stroke-width="2"/></svg>
</div>
<div class="abs" style="left:10px;top:76px;width:33px;height:34px;background:#fff;border-radius:4px;box-shadow:0 1px 3px rgba(0,0,0,.25)">
  <svg class="abs" style="left:8px;top:8px" width="18" height="18" viewBox="0 0 18 18">
    <g stroke="#222" stroke-width="1.3" fill="none">
      <path d="M2.5 2.5L7.3 7.3M15.5 2.5L10.7 7.3M2.5 15.5L7.3 10.7M15.5 15.5L10.7 10.7"/>
    </g>
    <g fill="#222">
      <path d="M1 1H5.8L1 5.8Z"/><path d="M17 1H12.2L17 5.8Z"/>
      <path d="M1 17H5.8L1 12.2Z"/><path d="M17 17H12.2L17 12.2Z"/>
    </g>
  </svg>
</div>
<div class="abs" style="left:570px;top:10px;width:33px;height:33px;background:#fff;border-radius:5px;box-shadow:0 1px 3px rgba(0,0,0,.3)">
  <svg class="abs" style="left:0;top:0" width="33" height="33" viewBox="0 0 33 33"><path d="M4.3 21.6 L16.5 29.1 L28.6 21.6 L28.6 23.4 L16.5 31.2 L4.3 23.4Z" fill="#a3a3a3"/><path d="M4.3 21.6 L16.5 14.1 L28.6 21.6 L16.5 29.1Z" fill="#ececec" stroke="#c4c4c4" stroke-width="0.6"/><path d="M4.3 17.1 L16.5 24.6 L28.6 17.1 L28.6 18.9 L16.5 26.7 L4.3 18.9Z" fill="#a3a3a3"/><path d="M4.3 17.1 L16.5 9.6 L28.6 17.1 L16.5 24.6Z" fill="#ececec" stroke="#c4c4c4" stroke-width="0.6"/><path d="M4.3 12.6 L16.5 20.1 L28.6 12.6 L28.6 14.4 L16.5 22.2 L4.3 14.4Z" fill="#a3a3a3"/><path d="M4.3 12.6 L16.5 5.1 L28.6 12.6 L16.5 20.1Z" fill="#ececec" stroke="#c4c4c4" stroke-width="0.6"/><path d="M8.5 12.6 L16.5 7.6 L24.4 12.6 L16.5 17.6Z" fill="#d9d9d9"/></svg>
</div>
<div class="abs" style="left:1.5px;top:266px;width:294.5px;height:18px;background:rgba(0,0,0,.49);border-radius:4px"></div>
<div class="abs" style="left:5px;top:267.5px;color:#f4f4f4;font-size:11px;font-weight:bold;line-height:12px;white-space:nowrap;transform:scaleX(0.872);transform-origin:0 0;text-shadow:0 0 1px rgba(0,0,0,.4)">Select a unit &#8212; Ctrl + click; select multiple units &#8212; Shift + drag</div>

</div><!--/map-->

<div class="abs" style="left:449.6px;top:377.5px;width:2.7px;height:2.7px;border-radius:50%;background:#000;box-shadow:0 0 1.5px #fff"></div>
<div class="abs" style="left:453.7px;top:377.5px;width:2.7px;height:2.7px;border-radius:50%;background:#000;box-shadow:0 0 1.5px #fff"></div>
<div class="abs" style="left:457.8px;top:377.5px;width:2.7px;height:2.7px;border-radius:50%;background:#000;box-shadow:0 0 1.5px #fff"></div>
</body></html>
